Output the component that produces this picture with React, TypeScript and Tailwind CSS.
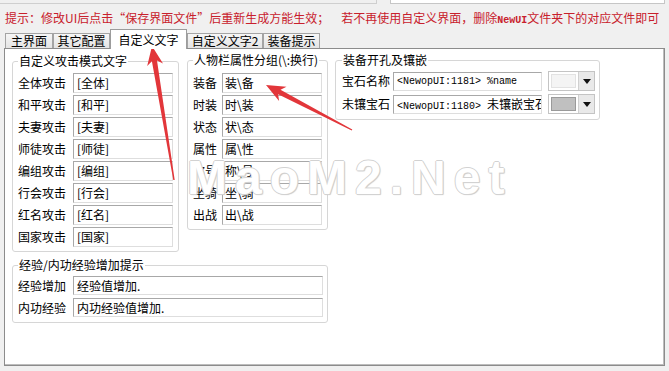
import React from "react";

const CJK = { fontFamily: '"Noto Sans CJK SC", "Noto Sans", sans-serif' };

function Field({
  value,
  w,
  h = 20,
  pl = 3,
}: {
  value: React.ReactNode;
  w: number;
  h?: number;
  pl?: number;
}) {
  return (
    <div
      className="shrink-0 bg-white border border-t-[#a8a8a8] border-l-[#a8a8a8] border-r-[#dedede] border-b-[#dedede] overflow-hidden whitespace-nowrap text-[12px] text-black flex items-center"
      style={{ width: w, height: h, paddingLeft: pl }}
    >
      {value}
    </div>
  );
}

function Row({
  label,
  value,
  lw,
  iw,
  h = 20,
  pl = 3,
}: {
  label: string;
  value: React.ReactNode;
  lw: number;
  iw: number;
  h?: number;
  pl?: number;
}) {
  return (
    <div className="flex items-center">
      <div className="shrink-0 text-[12px] leading-[14px] text-black whitespace-nowrap" style={{ width: lw }}>
        {label}
      </div>
      <Field value={value} w={iw} h={h} pl={pl} />
    </div>
  );
}

function Group({
  title,
  className,
  children,
}: {
  title: string;
  className: string;
  children: React.ReactNode;
}) {
  return (
    <fieldset className={"shrink-0 min-w-0 border border-[#d6d6d6] rounded-[3px] px-[5px] " + className}>
      <legend className="text-[12px] leading-[14px] text-black whitespace-nowrap px-[1px]">{title}</legend>
      {children}
    </fieldset>
  );
}

function Combo({ swatch, swBorder }: { swatch: string; swBorder: string }) {
  return (
    <div className="shrink-0 w-[47px] h-[20px] border border-[#c4c4c4] bg-white flex items-stretch">
      <div className="flex-1 p-[2px] flex">
        <div className="flex-1 border" style={{ background: swatch, borderColor: swBorder }} />
      </div>
      <div className="w-[16px] bg-[#e9e9e9] border-l border-[#d0d0d0] flex items-center justify-center">
        <svg width="8" height="5" viewBox="0 0 8 5">
          <path d="M0 0 H8 L4 5 Z" fill="#111" />
        </svg>
      </div>
    </div>
  );
}

function arrowPoints(tx: number, ty: number, hx: number, hy: number) {
  const dx = hx - tx;
  const dy = hy - ty;
  const len = Math.hypot(dx, dy);
  const ux = dx / len;
  const uy = dy / len;
  const nx = -uy;
  const ny = ux;
  const L = 19;
  const W = 8;
  const w1 = 2.6;
  const w0 = 0.7;
  const bx = hx - ux * L;
  const by = hy - uy * L;
  const nbx = hx - ux * (L - 4);
  const nby = hy - uy * (L - 4);
  const pts = [
    [tx + nx * w0, ty + ny * w0],
    [nbx + nx * w1, nby + ny * w1],
    [bx + nx * W, by + ny * W],
    [hx, hy],
    [bx - nx * W, by - ny * W],
    [nbx - nx * w1, nby - ny * w1],
    [tx - nx * w0, ty - ny * w0],
  ];
  return pts.map((p) => p[0].toFixed(1) + "," + p[1].toFixed(1)).join(" ");
}

export default function App() {
  const tabs = [
    { t: "主界面", w: 48 },
    { t: "其它配置", w: 57 },
    { t: "自定义文字", w: 77, active: true },
    { t: "自定义文字2", w: 76 },
    { t: "装备提示", w: 57 },
  ];
  const mono = { fontFamily: '"Liberation Mono", monospace' };
  return (
    <div className="relative w-[669px] h-[371px] bg-[#f0f0f0] overflow-hidden" style={CJK}>
      {/* top strip remnants */}
      <div className="flex h-[4px]">
        <div className="w-[377px] border-b border-r border-[#cfcfcf] bg-[#f0f0f0]" />
        <div className="ml-[13px] w-[275px] border-b border-l border-r border-[#c6c6c6] bg-white" />
      </div>
      {/* red hint */}
      <div className="flex h-[25px] pt-[7px] text-[12px] leading-[14px] text-[#c8202c] whitespace-nowrap">
        <span className="ml-[5px]">提示：修改UI后点击“保存界面文件”后重新生成方能生效；</span>
        <span className="ml-[12px]">
          若不再使用自定义界面，删除
          <span className="text-[10px] font-bold" style={mono}>
            NewUI
          </span>
          文件夹下的对应文件即可
        </span>
      </div>
      {/* tabs */}
      <div className="flex items-end h-[19px] ml-[5px] relative z-10">
        {tabs.map((tb) =>
          tb.active ? (
            <div
              key={tb.t}
              className="h-[20px] -mb-px bg-white border-t border-l border-r border-[#9c9c9c] flex items-center justify-center text-[12px] leading-[14px] text-black"
              style={{ width: tb.w }}
            >
              {tb.t}
            </div>
          ) : (
            <div
              key={tb.t}
              className="h-[15px] bg-gradient-to-b from-[#f6f6f6] to-[#e4e4e4] border-t border-l border-r border-[#a4a4a4] flex items-center justify-center text-[12px] leading-[14px] text-black"
              style={{ width: tb.w }}
            >
              {tb.t}
            </div>
          )
        )}
      </div>
      {/* panel */}
      <div className="ml-[4px] w-[661px] h-[318px] bg-white border border-[#8c8c8c] shadow-[inset_-1px_-1px_0_#bdbdbd] pl-[7px] pt-[5px]">
        <div className="flex items-start">
          <Group title="自定义攻击模式文字" className="w-[167px] pt-[5px] pb-[4px]">
            <div className="flex flex-col gap-[2px]">
              {["全体", "和平", "夫妻", "师徒", "编组", "行会", "红名", "国家"].map((k) => (
                <Row key={k} label={k + "攻击"} value={"[" + k + "]"} lw={55} iw={100} />
              ))}
            </div>
          </Group>
          <Group title="人物栏属性分组(\:换行)" className="ml-[8px] w-[141px] -mt-px pt-[6px] pb-[4px]">
            <div className="flex flex-col gap-[2px]">
              {[
                ["装备", "装\\备"],
                ["时装", "时\\装"],
                ["状态", "状\\态"],
                ["属性", "属\\性"],
                ["称号", "称\\号"],
                ["坐骑", "坐\\骑"],
                ["出战", "出\\战"],
              ].map(([a, b]) => (
                <Row key={a} label={a} value={b} lw={29} iw={100} pl={2} />
              ))}
            </div>
          </Group>
          <Group title="装备开孔及镶嵌" className="ml-[7px] w-[265px] -mt-px pt-[4px] pb-[5px] pl-[6px]">
            <div className="flex flex-col gap-[3px]">
              <div className="flex items-center">
                <div className="shrink-0 w-[51px] text-[12px] leading-[14px] text-black whitespace-nowrap">宝石名称</div>
                <Field
                  w={149}
                  h={19}
                  value={
                    <span className="text-[10px]" style={mono}>
                      {"<NewopUI:1181> %name"}
                    </span>
                  }
                />
                <div className="ml-[6px]">
                  <Combo swatch="#f4f4f4" swBorder="#e2e2e2" />
                </div>
              </div>
              <div className="flex items-center">
                <div className="shrink-0 w-[51px] text-[12px] leading-[14px] text-black whitespace-nowrap">未镶宝石</div>
                <Field
                  w={149}
                  h={19}
                  value={
                    <span className="whitespace-nowrap">
                      <span className="text-[10px]" style={mono}>
                        {"<NewopUI:1180> "}
                      </span>
                      未镶嵌宝石
                    </span>
                  }
                />
                <div className="ml-[6px]">
                  <Combo swatch="#c0c0c0" swBorder="#9a9a9a" />
                </div>
              </div>
            </div>
          </Group>
        </div>
        <Group title="经验/内功经验增加提示" className="w-[316px] mt-[6px] pt-[4px] pb-[5px]">
          <div className="flex flex-col gap-[3px]">
            <Row label="经验增加" value="经验值增加." lw={55} iw={250} h={19} />
            <Row label="内功经验" value="内功经验值增加." lw={55} iw={250} h={19} />
          </div>
        </Group>
      </div>
      {/* watermark */}
      <div
        className="absolute left-[187px] top-[150px] text-[48px] leading-[56px] font-bold text-white tracking-[8px] whitespace-nowrap pointer-events-none"
        style={{
          fontFamily: '"Liberation Sans", Arial, sans-serif',
          textShadow:
            "1px 0 0 #d2d2d2, -1px 0 0 #d2d2d2, 0 1px 0 #d2d2d2, 0 -1px 0 #d2d2d2, 1px 1px 1px #c4c4c4",
        }}
      >
        MaoM2.Net
      </div>
      {/* arrows */}
      <svg className="absolute left-0 top-0 pointer-events-none" width="669" height="371" viewBox="0 0 669 371">
        <polygon points={arrowPoints(174, 180, 152, 46)} fill="#e2363a" />
        <polygon points={arrowPoints(352, 130, 266, 85)} fill="#e2363a" />
      </svg>
    </div>
  );
}
